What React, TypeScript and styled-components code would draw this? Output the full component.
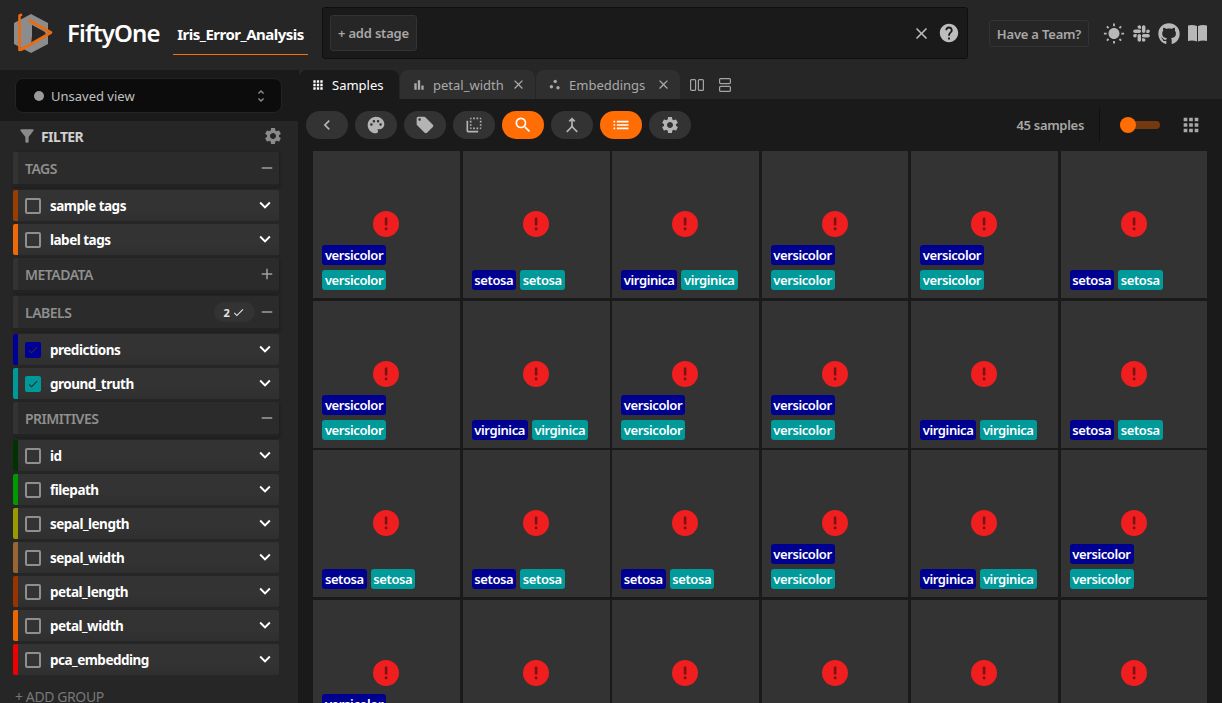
import styled, { createGlobalStyle } from 'styled-components';
import {
  MdApps,
  MdBarChart,
  MdChevronLeft,
  MdClose,
  MdExpandMore,
  MdFilterAlt,
  MdFlipToBack,
  MdList,
  MdHelp,
  MdLocalOffer,
  MdMerge,
  MdPalette,
  MdSearch,
  MdSettings,
  MdUnfoldMore,
  MdWbSunny,
  MdCheck,
  MdRemove,
  MdAdd,
} from 'react-icons/md';
import { FaGithub, FaSlack } from 'react-icons/fa';

const GlobalStyle = createGlobalStyle`
  html, body {
    margin: 0;
    height: 100%;
    overflow: hidden;
    background: #1a1a1a;
    font-family: "Noto Sans", "Open Sans", sans-serif;
  }
`;

const Page = styled.div`
  width: 1222px;
  height: 703px;
  display: flex;
  flex-direction: column;
  overflow: hidden;
`;

const Header = styled.header`
  height: 70px;
  flex: none;
  display: flex;
  background: #262626;
`;

const LogoBox = styled.div`
  width: 173px;
  display: flex;
  align-items: center;
  padding: 0 0 0 10px;
  box-sizing: border-box;
  gap: 13px;
  height: 65px;
`;

const Brand = styled.div`
  font-size: 24px;
  font-weight: 600;
  color: #fff;
  letter-spacing: -0.9px;
`;

const DatasetName = styled.div`
  width: 135px;
  height: 55px;
  border-bottom: 1px solid #ff6d04;
  font-size: 15px;
  font-weight: 700;
  color: #fff;
  letter-spacing: -0.5px;
  display: flex;
  align-items: center;
  justify-content: center;
  box-sizing: border-box;
  white-space: nowrap;
  padding-top: 13px;
`;

const ViewBar = styled.div`
  width: 646px;
  height: 52px;
  margin: 7px 0 0 14px;
  background: #1a1a1a;
  border: 1px solid #0f0f0f;
  border-radius: 3px;
  box-sizing: border-box;
  display: flex;
  align-items: center;
  padding: 0 7px 0 7px;
  color: #bdbdbd;
`;

const AddStage = styled.div`
  width: 87px;
  height: 36px;
  background: #262626;
  border: 1px solid #333;
  border-radius: 3px;
  box-sizing: border-box;
  font-size: 13px;
  font-weight: 600;
  letter-spacing: -0.2px;
  color: #a8a8a8;
  display: flex;
  align-items: center;
  justify-content: center;
  margin-right: auto;
`;

const HelpIcon = styled(MdHelp)`
  margin-left: 7px;
`;

const TeamButton = styled.div`
  width: 100px;
  height: 27px;
  margin: 20px 0 0 21px;
  border: 1px solid #333;
  border-radius: 3px;
  box-sizing: border-box;
  font-size: 13px;
  font-weight: 600;
  letter-spacing: -0.2px;
  color: #a8a8a8;
  display: flex;
  align-items: center;
  justify-content: center;
  white-space: nowrap;
`;

const HeaderIcons = styled.div`
  display: flex;
  align-items: center;
  margin: 20px 0 0 14px;
  height: 27px;
  gap: 7px;
  color: #b8b8b8;
`;

const Body = styled.div`
  flex: 1;
  display: flex;
  min-height: 0;
`;

const Sidebar = styled.aside`
  width: 299px;
  flex: none;
  background: #262626;
  border-right: 1px solid #191919;
  border-top-right-radius: 8px;
  box-sizing: border-box;
  display: flex;
  flex-direction: column;
  overflow: hidden;
`;

const ViewSelectWrap = styled.div`
  height: 51px;
  flex: none;
  background: #1a1a1a;
  padding: 8px 16px 0 15px;
  box-sizing: border-box;
`;

const ViewSelect = styled.div`
  height: 35px;
  background: #0c0c0c;
  border: 1px solid #23232b;
  border-radius: 8px;
  box-sizing: border-box;
  display: flex;
  align-items: center;
  padding: 0 12px 0 18px;
  gap: 7px;
  font-size: 13px;
  color: #c0c0c0;
`;

const UnfoldIcon = styled(MdUnfoldMore)`
  margin-left: auto;
  color: #8a8a8a;
`;

const Dot = styled.span`
  width: 10px;
  height: 10px;
  border-radius: 50%;
  background: #9a9a9a;
`;

const FilterTitle = styled.div`
  height: 30px;
  flex: none;
  display: flex;
  align-items: center;
  padding: 0 15px 0 17px;
  gap: 4px;
  font-size: 14px;
  font-weight: 700;
  color: #d0d0d0;
  letter-spacing: -0.6px;
  & > svg {
    color: #8a8a8a;
  }
  & > svg:last-child {
    margin-left: auto;
  }
`;

const Entries = styled.div`
  padding: 1px 0 0 13px;
  width: 266px;
  box-sizing: content-box;
`;

const GroupRow = styled.div`
  height: 35px;
  margin-bottom: 3px;
  display: flex;
  border-radius: 2px;
  overflow: hidden;
  background: #2b2b2b;
  border-bottom: 3px solid #232323;
  box-sizing: border-box;
  box-shadow: 1px 1px 3px rgba(0, 0, 0, 0.25);
`;

const Stripe = styled.div<{ $color: string }>`
  width: 5px;
  flex: none;
  background: ${(p) => p.$color};
`;

const GroupBody = styled.div`
  flex: 1;
  display: flex;
  align-items: center;
  padding: 0 3px 0 7px;
  font-size: 14px;
  font-weight: 600;
  color: #8f8f8f;
  letter-spacing: -0.5px;
  background: #2b2b2b;
`;

const Count = styled.div`
  margin-left: auto;
  width: 41px;
  height: 20px;
  border-radius: 10px;
  background: #333;
  display: flex;
  align-items: center;
  justify-content: center;
  gap: 3px;
  font-size: 11px;
  font-weight: 700;
  color: #e4e4e4;
  margin-right: 3px;
`;

const GroupToggle = styled.div<{ $pushed?: boolean }>`
  ${(p) => (p.$pushed ? 'margin-left: auto;' : '')}
  display: flex;
  color: #a0a0a0;
`;

const FieldRow = styled.div`
  height: 31px;
  margin-bottom: 3px;
  display: flex;
  border-radius: 2px;
  overflow: hidden;
  background: linear-gradient(#333 60%, #2f2f2f);
`;

const FieldBody = styled.div`
  flex: 1;
  display: flex;
  align-items: center;
  padding: 0 3px 0 7px;
  gap: 9px;
  font-size: 13.5px;
  font-weight: 700;
  color: #fff;
  letter-spacing: -0.5px;
`;

const Check = styled.span<{ $color?: string }>`
  width: 16px;
  height: 16px;
  border-radius: 2px;
  box-sizing: border-box;
  border: 2px solid ${(p) => p.$color ?? '#8f8f8f'};
  background: ${(p) => p.$color ?? 'transparent'};
  display: flex;
  align-items: center;
  justify-content: center;
  color: #2d2d2d;
  flex: none;
`;

const Chevron = styled.span`
  margin-left: auto;
  display: flex;
  color: #fff;
  margin-top: -1px;
`;

const AddGroup = styled.div`
  margin: 12px 0 0 2px;
  font-size: 14px;
  color: #777;
  letter-spacing: -0.4px;
  white-space: nowrap;
`;

const Main = styled.main`
  flex: 1;
  min-width: 0;
  display: flex;
  flex-direction: column;
`;

const TabBar = styled.div`
  height: 29px;
  flex: none;
  display: flex;
  align-items: stretch;
  background: #262626;
`;

const Tab = styled.div<{ $active?: boolean; $w: number }>`
  width: ${(p) => p.$w}px;
  flex: none;
  box-sizing: border-box;
  background: ${(p) => (p.$active ? '#1a1a1a' : '#2f2f2f')};
  border-radius: 8px 8px 0 0;
  margin-right: 1px;
  display: flex;
  align-items: center;
  padding: 0 9px 0 12px;
  gap: 7px;
  font-size: 13px;
  color: ${(p) => (p.$active ? '#fff' : '#a9a9a9')};
`;

const TabClose = styled(MdClose)`
  margin-left: auto;
`;

const SplitIcons = styled.div`
  display: flex;
  align-items: center;
  gap: 14px;
  padding-left: 9px;
  color: #a5a5a5;
`;

const Toolbar = styled.div`
  height: 51px;
  flex: none;
  display: flex;
  align-items: center;
  padding: 0 0 0 7px;
  gap: 7px;
  background: #1a1a1a;
  box-sizing: border-box;
`;

const Pill = styled.div<{ $on?: boolean }>`
  width: 42px;
  height: 28px;
  border-radius: 14px;
  background: ${(p) => (p.$on ? '#ff6d04' : '#333')};
  color: ${(p) => (p.$on ? '#fff' : '#b4b4b4')};
  display: flex;
  align-items: center;
  justify-content: center;
  flex: none;
`;

const SampleCount = styled.div`
  margin-left: auto;
  font-size: 13px;
  font-weight: 600;
  color: #a8a8a8;
  letter-spacing: -0.3px;
`;

const Divider = styled.div`
  width: 1px;
  height: 34px;
  background: #101010;
  margin: 0 13px 0 8px;
`;

const Slider = styled.div`
  width: 40px;
  height: 8px;
  border-radius: 4px;
  background: #74390f;
  position: relative;
  margin-right: 13px;
`;

const Thumb = styled.div`
  position: absolute;
  left: 0;
  top: -4px;
  width: 16px;
  height: 16px;
  border-radius: 50%;
  background: #ff6d04;
`;

const GridIcon = styled.div`
  margin-right: 20px;
  display: flex;
  color: #a8a8a8;
`;

const Grid = styled.div`
  flex: 1;
  min-height: 0;
  overflow: hidden;
  background: #1a1a1a;
  padding: 1.4px 14.6px 0 14.4px;
  display: grid;
  grid-template-columns: repeat(6, 1fr);
  grid-auto-rows: 146.7px;
  gap: 2.8px;
`;

const Cell = styled.div`
  background: #333;
  position: relative;
  display: flex;
  flex-direction: column;
  justify-content: flex-end;
  padding: 0 0 8px 9px;
  gap: 5px;
  box-sizing: border-box;
`;

const ErrorMark = styled.svg`
  position: absolute;
  left: 60px;
  top: 60px;
  width: 26px;
  height: 26px;
`;

const TagRow = styled.div`
  display: flex;
  gap: 4px;
`;

const Tag = styled.span<{ $kind: 'pred' | 'truth' }>`
  height: 20px;
  padding: 0 3px 0 2.5px;
  border-radius: 3px;
  background: ${(p) => (p.$kind === 'pred' ? '#000090' : '#009a9a')};
  color: #fff;
  font-size: 13px;
  font-weight: 600;
  letter-spacing: -0.4px;
  line-height: 20px;
  white-space: nowrap;
`;

const fieldsA = [
  { name: 'sample tags', color: '#993d00' },
  { name: 'label tags', color: '#ee6a06' },
];
const fieldsB = [
  { name: 'predictions', color: '#000099', check: '#000099' },
  { name: 'ground_truth', color: '#009999', check: '#009999' },
];
const fieldsC = [
  { name: 'id', color: '#003300' },
  { name: 'filepath', color: '#009900' },
  { name: 'sepal_length', color: '#999900' },
  { name: 'sepal_width', color: '#996633' },
  { name: 'petal_length', color: '#993300' },
  { name: 'petal_width', color: '#ee6600' },
  { name: 'pca_embedding', color: '#ee0000' },
];

// class of each sample, prediction and ground truth are the same here
const samples = [
  'versicolor', 'setosa', 'virginica', 'versicolor', 'versicolor', 'setosa',
  'versicolor', 'virginica', 'versicolor', 'versicolor', 'virginica', 'setosa',
  'setosa', 'setosa', 'setosa', 'versicolor', 'virginica', 'versicolor',
  'versicolor', '', '', '', '', '',
];

function Logo() {
  return (
    <svg width="44" height="44" viewBox="0 0 44 44">
      <path d="M21 3 L38 12 L38 33 L21 42 L4 33 L4 12 Z" fill="#8c8c8c" />
      <path d="M22 14 L35 21 L36 24 L21 34 L22 25 Z" fill="#262626" />
      <path
        d="M12 3.5 L9.5 4.5 L9.5 39 L12 38.5 M18.5 9 L41 21.5 L11.5 38.5"
        fill="none"
        stroke="#ee6a0e"
        strokeWidth="2.6"
        strokeLinejoin="round"
      />
    </svg>
  );
}

function BookIcon() {
  return (
    <svg width="21" height="19" viewBox="0 0 21 19" fill="currentColor">
      <path d="M1 1.5 C4 0.6 7 0.8 10 2 L10 17.5 C7 16.3 4 16.1 1 17 Z" />
      <path d="M11 2 C14 0.8 17 0.6 20 1.5 L20 17 C17 16.1 14 16.3 11 17.5 Z" />
    </svg>
  );
}

function DotsIcon() {
  return (
    <svg width="14" height="14" viewBox="0 0 14 14" fill="currentColor">
      <circle cx="7.2" cy="3.4" r="1.7" />
      <circle cx="3.4" cy="8.8" r="1.7" />
      <circle cx="10" cy="9.8" r="1.7" />
    </svg>
  );
}

function Field({ name, color, check }: { name: string; color: string; check?: string }) {
  return (
    <FieldRow>
      <Stripe $color={color} />
      <FieldBody>
        <Check $color={check}>{check && <MdCheck size={14} />}</Check>
        {name}
        <Chevron>
          <MdExpandMore size={22} />
        </Chevron>
      </FieldBody>
    </FieldRow>
  );
}

function Group({ name, open, count }: { name: string; open: boolean; count?: number }) {
  return (
    <GroupRow>
      <Stripe $color="#333" />
      <GroupBody>
        {name}
        {count !== undefined && (
          <Count>
            {count}
            <MdCheck size={13} />
          </Count>
        )}
        <GroupToggle $pushed={count === undefined}>
          {open ? <MdRemove size={18} /> : <MdAdd size={18} />}
        </GroupToggle>
      </GroupBody>
    </GroupRow>
  );
}

export default function App() {
  return (
    <Page>
      <GlobalStyle />
      <Header>
        <LogoBox>
          <Logo />
          <Brand>FiftyOne</Brand>
        </LogoBox>
        <DatasetName>Iris_Error_Analysis</DatasetName>
        <ViewBar>
          <AddStage>+ add stage</AddStage>
          <MdClose size={19} />
          <HelpIcon size={22} />
        </ViewBar>
        <TeamButton>Have a Team?</TeamButton>
        <HeaderIcons>
          <MdWbSunny size={22} />
          <FaSlack size={19} />
          <FaGithub size={22} />
          <BookIcon />
        </HeaderIcons>
      </Header>
      <Body>
        <Sidebar>
          <ViewSelectWrap>
            <ViewSelect>
              <Dot />
              Unsaved view
              <UnfoldIcon size={16} />
            </ViewSelect>
          </ViewSelectWrap>
          <FilterTitle>
            <MdFilterAlt size={20} />
            FILTER
            <MdSettings size={20} />
          </FilterTitle>
          <Entries>
            <Group name="TAGS" open />
            {fieldsA.map((f) => (
              <Field key={f.name} {...f} />
            ))}
            <Group name="METADATA" open={false} />
            <Group name="LABELS" open count={2} />
            {fieldsB.map((f) => (
              <Field key={f.name} {...f} />
            ))}
            <Group name="PRIMITIVES" open />
            {fieldsC.map((f) => (
              <Field key={f.name} {...f} />
            ))}
            <AddGroup>+ ADD GROUP</AddGroup>
          </Entries>
        </Sidebar>
        <Main>
          <TabBar>
            <Tab $active $w={100}>
              <MdApps size={14} />
              Samples
            </Tab>
            <Tab $w={135}>
              <MdBarChart size={14} />
              petal_width
              <TabClose size={15} />
            </Tab>
            <Tab $w={144}>
              <DotsIcon />
              Embeddings
              <TabClose size={15} />
            </Tab>
            <SplitIcons>
              <svg width="14" height="14" viewBox="0 0 14 14" fill="none" stroke="currentColor" strokeWidth="1.2">
                <rect x="0.6" y="1.6" width="5" height="10.8" rx="1" />
                <rect x="8.4" y="1.6" width="5" height="10.8" rx="1" />
              </svg>
              <svg width="14" height="16" viewBox="0 0 14 16" fill="none" stroke="currentColor" strokeWidth="1.2">
                <rect x="1.6" y="1.6" width="10.8" height="5" rx="1" />
                <rect x="1.6" y="9.4" width="10.8" height="5" rx="1" />
              </svg>
            </SplitIcons>
          </TabBar>
          <Toolbar>
            <Pill>
              <MdChevronLeft size={20} />
            </Pill>
            <Pill>
              <MdPalette size={20} />
            </Pill>
            <Pill>
              <MdLocalOffer size={20} />
            </Pill>
            <Pill>
              <MdFlipToBack size={20} />
            </Pill>
            <Pill $on>
              <MdSearch size={20} />
            </Pill>
            <Pill>
              <MdMerge size={20} />
            </Pill>
            <Pill $on>
              <MdList size={20} />
            </Pill>
            <Pill>
              <MdSettings size={20} />
            </Pill>
            <SampleCount>45 samples</SampleCount>
            <Divider />
            <Slider>
              <Thumb />
            </Slider>
            <GridIcon>
              <MdApps size={22} />
            </GridIcon>
          </Toolbar>
          <Grid>
            {samples.map((name, i) => (
              <Cell key={i}>
                <ErrorMark viewBox="0 0 26 26">
                  <circle cx="13" cy="13" r="13" fill="#f01e1e" />
                  <rect x="11.8" y="6.5" width="2.6" height="8" rx="0.6" fill="#7a1414" />
                  <rect x="11.8" y="16.4" width="2.6" height="2.8" rx="0.6" fill="#7a1414" />
                </ErrorMark>
                {name === 'versicolor' ? (
                  <>
                    <TagRow>
                      <Tag $kind="pred">{name}</Tag>
                    </TagRow>
                    <TagRow>
                      <Tag $kind="truth">{name}</Tag>
                    </TagRow>
                  </>
                ) : (
                  name && (
                    <TagRow>
                      <Tag $kind="pred">{name}</Tag>
                      <Tag $kind="truth">{name}</Tag>
                    </TagRow>
                  )
                )}
              </Cell>
            ))}
          </Grid>
        </Main>
      </Body>
    </Page>
  );
}
